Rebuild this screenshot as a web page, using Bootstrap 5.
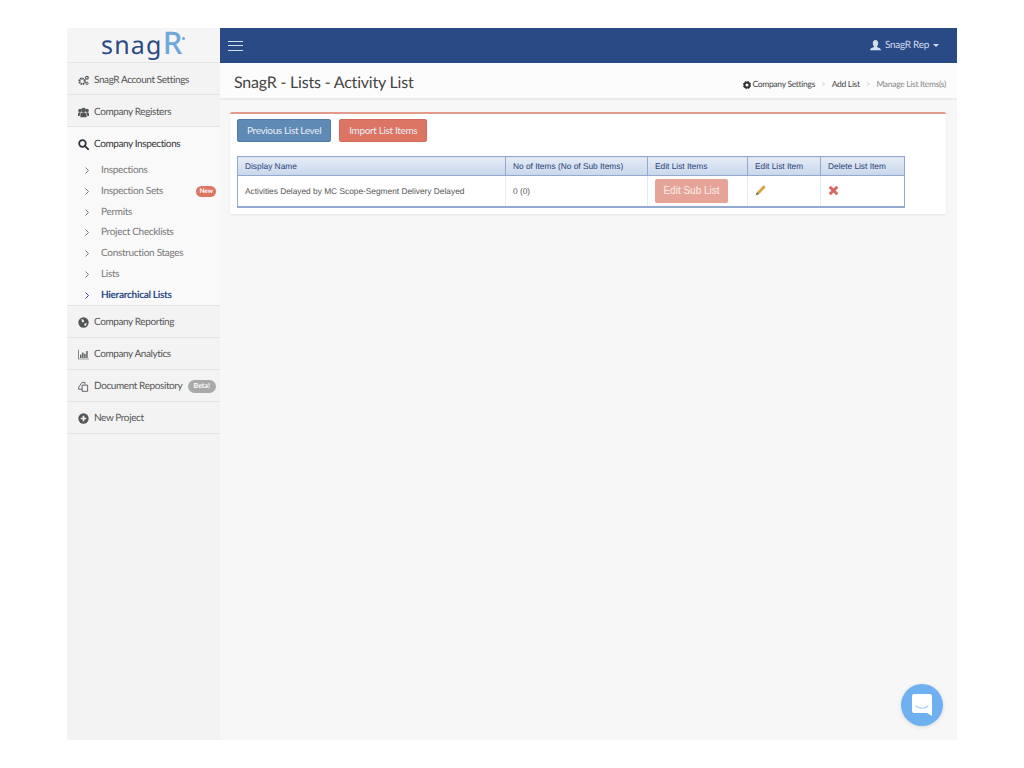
<!DOCTYPE html>
<html lang="en">
<head>
  <meta charset="UTF-8" />
  <title>SnagR - Lists - Activity List</title>
  <meta name="viewport" content="width=device-width, initial-scale=1" />
  <link href="https://cdn.jsdelivr.net/npm/bootstrap@5.3.0/dist/css/bootstrap.min.css" rel="stylesheet" />
  <style>
    body {
      background: #fff;
      font-family: "Lato", "Liberation Sans", sans-serif;
      color: #555;
      overflow: hidden;
      text-rendering: geometricPrecision;
    }

    .app {
      width: 890px;
      height: 712px;
      margin: 28px 0 0 67px;
      position: relative;
      background: #f7f7f7;
    }

    .sidebar {
      width: 153px;
      background: #f3f3f3;
      flex: none;
    }

    .logo {
      height: 35px;
      background: #f5f5f5;
      border-bottom: 1px solid #e4e4e4;
      color: #2a4a86;
      font-family: "Noto Sans", sans-serif;
      font-size: 25px;
      line-height: 30px;
      letter-spacing: 1.2px;
      padding-left: 34px;
      white-space: nowrap;
    }

    .logo span {
      color: #6fa8dc;
      font-size: 31px;
      font-weight: 500;
      letter-spacing: 0;
      position: relative;
    }

    .logo span::after {
      content: "";
      position: absolute;
      right: -3px;
      top: 15px;
      width: 3px;
      height: 3px;
      border-radius: 50%;
      background: #6fa8dc;
    }

    .side-link {
      height: 32px;
      padding: 3px 0 0 11px;
      font-size: 10px;
      letter-spacing: -.4px;
      color: #555;
      border-bottom: 1px solid #e4e4e4;
      text-decoration: none;
      gap: 5px;
      white-space: nowrap;
    }

    .side-link svg {
      width: 11px;
      height: 11px;
      flex: none;
    }

    .side-link.open {
      height: 31px;
      padding-top: 4px;
      background: #f9f9f9;
      color: #333;
      border-bottom: 0;
    }

    .sub-list {
      background: #f9f9f9;
      border-bottom: 1px solid #e4e4e4;
      padding-top: 1px;
    }

    .sub-link {
      height: 20.85px;
      padding: 2px 0 0 18px;
      font-size: 10px;
      letter-spacing: -.3px;
      color: #777;
      text-decoration: none;
      gap: 12px;
    }

    .sub-link svg {
      width: 4px;
      height: 7px;
      flex: none;
    }

    .sub-link.active {
      color: #2a4a86;
      font-weight: 700;
    }

    .pill {
      font-size: 6.5px;
      font-weight: 700;
      letter-spacing: 0;
      color: #fff;
      border-radius: 8px;
      padding: 1px 3px;
      margin-right: 4px;
      line-height: 9px;
    }

    .pill-new {
      background: #dc7564;
    }

    .pill-beta {
      background: #a9a9a9;
      padding: 2px 6px;
      font-size: 7px;
    }

    .topbar {
      height: 35px;
      background: #2a4a86;
      color: #d5deee;
      padding: 0 18px 0 8px;
      font-size: 10px;
    }

    .topbar .user {
      letter-spacing: -.3px;
    }

    .burger {
      width: 15px;
      height: 10px;
      border-top: 1px solid #d5deee;
      border-bottom: 1px solid #d5deee;
      position: relative;
    }

    .burger::after {
      content: "";
      position: absolute;
      left: 0;
      right: 0;
      top: 3.5px;
      border-top: 1px solid #d5deee;
    }

    .caret-down {
      border-top: 3px solid #d5deee;
      border-left: 3px solid transparent;
      border-right: 3px solid transparent;
    }

    .page-head {
      height: 37px;
      background: #fcfcfc;
      border-bottom: 2px solid #ececec;
      padding: 4px 11px 0 14px;
    }

    .page-head h1 {
      font-size: 16px;
      font-weight: 400;
      letter-spacing: -.2px;
      color: #444;
      margin: 0;
    }

    .crumbs {
      font-size: 8.5px;
      letter-spacing: -.3px;
      color: #444;
      gap: 6px;
      padding-top: 4px;
    }

    .crumbs svg {
      margin-right: 1px;
    }

    .crumbs .sep {
      color: #ccc;
    }

    .crumbs .last {
      color: #888;
    }

    .panel {
      margin: 12px 11px 0 10px;
      background: #fff;
      border-top: 2px solid #e29a8a;
      border-radius: 2px;
      box-shadow: 0 1px 2px rgba(0, 0, 0, .08);
      padding: 5px 7px 6px;
    }

    .btn-flat {
      font-size: 10px;
      letter-spacing: -.35px;
      color: #e8edf4;
      height: 23px;
      padding: 0 9px;
      line-height: 21px;
      border-radius: 2px;
    }

    .btn-prev {
      background: #5f8ab6;
      border: 1px solid #4f7ba8;
    }

    .btn-import {
      background: #dc7564;
      border: 1px solid #d26a59;
    }

    table.list {
      width: 667px;
      margin-top: 14px;
      border-collapse: collapse;
      table-layout: fixed;
      font-family: "Liberation Sans", Arial, sans-serif;
      font-size: 8.33px;
      border: 1px solid #93a9d0;
      border-bottom-width: 2px;
    }

    table.list th {
      height: 19px;
      font-weight: 400;
      color: #2a3f7a;
      padding: 0 7px;
      background: linear-gradient(#e4ebf5, #c9d7ec);
      border-right: 1px solid #93a9d0;
      border-bottom: 1px solid #93a9d0;
    }

    table.list td {
      height: 31px;
      color: #555;
      padding: 0 7px;
      border-right: 1px solid #e6eaf3;
    }

    table.list td:last-child {
      border-right: 1px solid #93a9d0;
    }

    .btn-sub {
      background: #e6a498;
      color: #fbeeeb;
      font-size: 10px;
      height: 24px;
      width: 73px;
      line-height: 24px;
      padding: 0;
      border: 0;
      border-radius: 2px;
    }

    .chat {
      position: absolute;
      left: 834px;
      top: 656px;
      width: 42px;
      height: 42px;
      border-radius: 50%;
      background: #6fb1f0;
      box-shadow: 0 1px 4px rgba(0, 0, 0, .12);
    }
  </style>
</head>
<body>
  <div class="app d-flex">
    <div class="sidebar">
      <div class="logo">snag<span>R</span></div>

      <a class="side-link d-flex align-items-center" href="#">
        <svg viewBox="0 0 16 16" fill="#555"><circle cx="6" cy="9" r="4" fill="none" stroke="#555" stroke-width="3" stroke-dasharray="2.2 .9"/><circle cx="13" cy="4" r="2" fill="none" stroke="#555" stroke-width="1.6"/><circle cx="13" cy="12" r="1.7" fill="none" stroke="#555" stroke-width="1.4"/></svg>
        SnagR Account Settings
      </a>
      <a class="side-link d-flex align-items-center" href="#">
        <svg viewBox="0 0 16 16" fill="#555"><circle cx="8" cy="4.500" r="3.500"/><circle cx="2.800" cy="5" r="2.500"/><circle cx="13.200" cy="5" r="2.500"/><path d="M3.500 15v-4c0-2 2-3.500 4.500-3.500s4.500 1.500 4.500 3.500v4zM0 13v-3c0-1.500 1-2.500 3-2.500l1.500 1C3 9.500 2.500 11 2.500 13zM16 13v-3c0-1.500-1-2.500-3-2.500l-1.500 1c1.500 1 2 2.500 2 4.500z"/></svg>
        Company Registers
      </a>
      <a class="side-link open d-flex align-items-center" href="#">
        <svg viewBox="0 0 16 16" fill="none" stroke="#333" stroke-width="2.600"><circle cx="6.500" cy="6.500" r="4.800"/><path d="M10 10l5 5" stroke-linecap="round"/></svg>
        Company Inspections
      </a>

      <div class="sub-list">
        <a class="sub-link d-flex align-items-center" href="#"><svg viewBox="0 0 4 7" fill="none" stroke="#777"><path d="M.5.5l3 3-3 3"/></svg>Inspections</a>
        <a class="sub-link d-flex align-items-center" href="#"><svg viewBox="0 0 4 7" fill="none" stroke="#777"><path d="M.5.5l3 3-3 3"/></svg>Inspection Sets<span class="pill pill-new ms-auto">New</span></a>
        <a class="sub-link d-flex align-items-center" href="#"><svg viewBox="0 0 4 7" fill="none" stroke="#777"><path d="M.5.5l3 3-3 3"/></svg>Permits</a>
        <a class="sub-link d-flex align-items-center" href="#"><svg viewBox="0 0 4 7" fill="none" stroke="#777"><path d="M.5.5l3 3-3 3"/></svg>Project Checklists</a>
        <a class="sub-link d-flex align-items-center" href="#"><svg viewBox="0 0 4 7" fill="none" stroke="#777"><path d="M.5.5l3 3-3 3"/></svg>Construction Stages</a>
        <a class="sub-link d-flex align-items-center" href="#"><svg viewBox="0 0 4 7" fill="none" stroke="#777"><path d="M.5.5l3 3-3 3"/></svg>Lists</a>
        <a class="sub-link active d-flex align-items-center" href="#"><svg viewBox="0 0 4 7" fill="none" stroke="#2a4a86"><path d="M.5.5l3 3-3 3"/></svg>Hierarchical Lists</a>
      </div>

      <a class="side-link d-flex align-items-center" href="#">
        <svg viewBox="0 0 16 16"><circle cx="8" cy="8" r="7.500" fill="#555"/><path d="M5 3l3 1 1 3-3 1zM10 9l3 0-2 4-2-1z" fill="#f3f3f3"/></svg>
        Company Reporting
      </a>
      <a class="side-link d-flex align-items-center" href="#">
        <svg viewBox="0 0 16 16" fill="#555"><path d="M0 1h1v13h15v1H0zM3 8h2v5H3zM6 5h2v8H6zM9 7h2v6H9zM12 3h2v10h-2z"/></svg>
        Company Analytics
      </a>
      <a class="side-link d-flex align-items-center" href="#">
        <svg viewBox="0 0 16 16" fill="none" stroke="#555" stroke-width="1.300"><path d="M1 9l5-7h4v3M6 6h8v9H6zM1 9v3h5"/></svg>
        Document Repository<span class="pill pill-beta ms-auto">Beta!</span>
      </a>
      <a class="side-link d-flex align-items-center" href="#">
        <svg viewBox="0 0 16 16"><circle cx="8" cy="8" r="7.500" fill="#555"/><path d="M4 8h8M8 4v8" stroke="#f3f3f3" stroke-width="2.500"/></svg>
        New Project
      </a>
    </div>

    <div class="flex-grow-1 d-flex flex-column">
      <div class="topbar d-flex align-items-center justify-content-between">
        <div class="burger"></div>
        <div class="d-flex align-items-center gap-1">
          <svg width="11" height="11" viewBox="0 0 16 16" fill="#d5deee"><path d="M8 0c2.500 0 4 2 4 4.500S10.500 9 10 10c2 1 6 1.500 6 5H0c0-3.500 4-4 6-5-.5-1-2-3-2-5.500S5.500 0 8 0z"/></svg>
          <span class="user">SnagR Rep</span>
          <span class="caret-down"></span>
        </div>
      </div>

      <div class="page-head d-flex align-items-center justify-content-between">
        <h1>SnagR - Lists - Activity List</h1>
        <div class="crumbs d-flex align-items-center">
          <span class="d-flex align-items-center">
            <svg width="8" height="8" viewBox="0 0 16 16"><circle cx="8" cy="8" r="5" fill="none" stroke="#333" stroke-width="4"/><circle cx="8" cy="8" r="7.500" fill="none" stroke="#333" stroke-width="2" stroke-dasharray="3 2.900"/></svg>Company Settings
          </span>
          <span class="sep">&gt;</span>
          <span>Add List</span>
          <span class="sep">&gt;</span>
          <span class="last">Manage List Items(s)</span>
        </div>
      </div>

      <div class="panel">
        <div class="d-flex gap-2">
          <button class="btn btn-flat btn-prev" type="button">Previous List Level</button>
          <button class="btn btn-flat btn-import" type="button">Import List Items</button>
        </div>

        <table class="list">
          <colgroup>
            <col style="width: 268px" />
            <col style="width: 142px" />
            <col style="width: 100px" />
            <col style="width: 73px" />
            <col style="width: 84px" />
          </colgroup>
          <thead>
            <tr>
              <th>Display Name</th>
              <th>No of Items (No of Sub Items)</th>
              <th>Edit List Items</th>
              <th>Edit List Item</th>
              <th>Delete List Item</th>
            </tr>
          </thead>
          <tbody>
            <tr>
              <td>Activities Delayed by MC Scope-Segment Delivery Delayed</td>
              <td>0 (0)</td>
              <td><button class="btn btn-sub" type="button">Edit Sub List</button></td>
              <td>
                <svg width="11" height="11" viewBox="0 0 16 16" class="d-block"><path d="M3 10L11.500 1.500l3 3L6 13z" fill="#d9a53a"/><path d="M11.500 1.500l1-1 3 3-1 1z" fill="#c8685a"/><path d="M3 10l3 3-5 2z" fill="#6b5a3a"/></svg>
              </td>
              <td>
                <svg width="11" height="11" viewBox="0 0 16 16" class="d-block"><path d="M1 4l3-3 4 4 4-4 3 3-4 4 4 4-3 3-4-4-4 4-3-3 4-4z" fill="#d9675f"/></svg>
              </td>
            </tr>
          </tbody>
        </table>
      </div>
    </div>

    <div class="chat d-flex align-items-center justify-content-center">
      <svg width="20" height="22" viewBox="0 0 20 22"><path d="M2 0h16a2 2 0 0 1 2 2v20l-5-3H2a2 2 0 0 1-2-2V2a2 2 0 0 1 2-2z" fill="#fff"/><path d="M4 12c3 3 9 3 12 0" fill="none" stroke="#a9cff5" stroke-width="1.200" stroke-linecap="round"/></svg>
    </div>
  </div>
  <script src="https://cdn.jsdelivr.net/npm/bootstrap@5.3.0/dist/js/bootstrap.bundle.min.js"></script>
</body>
</html>
